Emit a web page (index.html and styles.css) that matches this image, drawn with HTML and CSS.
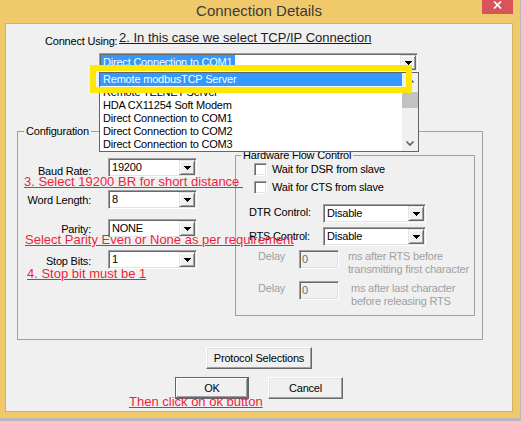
FILE: index.html
```html
<!DOCTYPE html>
<html>
<head>
<meta charset="utf-8">
<link rel="stylesheet" href="styles.css">
</head>
<body>
<div class="window">
  <div class="titlebar">
    <span class="title">Connection Details</span>
    <span class="close"><svg width="9" height="8" viewBox="0 0 9 8"><path d="M1 0.5L8 7.5M8 0.5L1 7.5" stroke="#fff" stroke-width="1.7"/></svg></span>
  </div>
  <div class="client">
    <div class="connect-label">Connect Using:</div>
    <div class="combo combo-conn">
      <span class="combo-text"><span class="sel">Direct Connection to COM1</span></span>
      <span class="drop"><i class="tri"></i></span>
    </div>

    <div class="group config">
      <div class="group-title">Configuration</div>
      <div class="config-body">
        <div class="serial">
          <span class="lbl lbl-baud">Baud Rate:</span>
          <div class="combo"><span class="combo-text">19200</span><span class="drop"><i class="tri"></i></span></div>
          <span class="lbl">Word Length:</span>
          <div class="combo"><span class="combo-text">8</span><span class="drop"><i class="tri"></i></span></div>
          <span class="lbl">Parity:</span>
          <div class="combo"><span class="combo-text">NONE</span><span class="drop"><i class="tri"></i></span></div>
          <span class="lbl lbl-stop">Stop Bits:</span>
          <div class="combo"><span class="combo-text">1</span><span class="drop"><i class="tri"></i></span></div>
        </div>

        <div class="group hw">
          <div class="group-title hw-title">Hardware Flow Control</div>
          <div class="check-row"><span class="checkbox"></span><span>Wait for DSR from slave</span></div>
          <div class="check-row check-row-2"><span class="checkbox"></span><span>Wait for CTS from slave</span></div>
          <div class="ctl-row">
            <span class="ctl-label">DTR Control:</span>
            <div class="combo combo-wide"><span class="combo-text">Disable</span><span class="drop"><i class="tri"></i></span></div>
          </div>
          <div class="ctl-row ctl-row-2">
            <span class="ctl-label ctl-label-2">RTS Control:</span>
            <div class="combo combo-wide"><span class="combo-text">Disable</span><span class="drop"><i class="tri"></i></span></div>
          </div>
          <div class="delay-row">
            <span class="delay-label">Delay</span>
            <span class="delay-input">0</span>
            <span class="delay-desc">ms after RTS before<br>transmitting first character</span>
          </div>
          <div class="delay-row delay-row-2">
            <span class="delay-label">Delay</span>
            <span class="delay-input">0</span>
            <span class="delay-desc">ms after last character<br>before releasing RTS</span>
          </div>
        </div>
      </div>
    </div>

    <div class="btn-row">
      <button class="btn btn-proto">Protocol Selections</button>
    </div>
    <div class="btn-row btn-row-2">
      <button class="btn btn-default btn-ok">OK</button>
      <button class="btn btn-cancel">Cancel</button>
    </div>
  </div>

  <div class="dropdown">
    <ul class="dd-items">
      <li class="active">Remote modbusTCP Server</li>
      <li>Remote TELNET Server</li>
      <li>HDA CX11254 Soft Modem</li>
      <li>Direct Connection to COM1</li>
      <li>Direct Connection to COM2</li>
      <li>Direct Connection to COM3</li>
    </ul>
    <div class="dd-scroll">
      <span class="sb-btn"><svg width="16" height="16" viewBox="0 0 16 16"><path d="M4.5 9.5L8 6L11.5 9.5" fill="none" stroke="#606060" stroke-width="1.6"/></svg></span>
      <span class="sb-thumb"></span>
      <span class="sb-space"></span>
      <span class="sb-btn"><svg width="16" height="16" viewBox="0 0 16 16"><path d="M4.5 6.5L8 10L11.5 6.5" fill="none" stroke="#606060" stroke-width="1.6"/></svg></span>
    </div>
  </div>
  <div class="callout"></div>

  <span class="note note-dark note-2">2. In this case we select TCP/IP Connection</span>
  <span class="note note-3">3. Select 19200 BR for short distance&nbsp;</span>
  <span class="note note-parity">Select Parity Even or None as per requirement</span>
  <span class="note note-4">4. Stop bit must be 1</span>
  <span class="note note-ok">Then click on ok button</span>
</div>
</body>
</html>
```

FILE: styles.css
```css
* { box-sizing: border-box; }
html, body { margin: 0; padding: 0; }
body {
  background: #b9b9b9;
  width: 521px;
  height: 421px;
  overflow: hidden;
  font-family: "Liberation Sans", Arial, sans-serif;
  font-size: 11px;
  color: #000;
}
.window {
  position: relative;
  width: 520px;
  height: 418px;
  background: #f0c96b;
  padding: 0 7px 6px 5px;
}
.titlebar {
  height: 23px;
  display: grid;
  grid-template-columns: 1fr auto 1fr;
  align-items: start;
}
.title {
  grid-column: 2;
  font-size: 15px;
  line-height: 17px;
  padding-top: 2px;
  color: #3b3b3b;
}
.close {
  grid-column: 3;
  justify-self: end;
  width: 31px;
  height: 14px;
  background: #d9545a;
  display: flex;
  align-items: flex-start;
  justify-content: center;
  padding-top: 1px;
}
.close svg { display: block; }

.client {
  width: 508px;
  height: 389px;
  background: #f0f0f0;
  border: 1px solid #d3b063;
  letter-spacing: -0.2px;
}
.connect-label {
  margin: 11px 0 0 39px;
  line-height: 13px;
}

/* combo boxes */
.combo {
  display: flex;
  height: 19px;
  background: #fff;
  border: 1px solid;
  border-color: #a0a0a0 #fff #fff #a0a0a0;
  box-shadow: inset 1px 1px #696969, inset -1px -1px #e3e3e3;
  padding: 1px;
}
.combo-text {
  flex: 1;
  line-height: 15px;
  padding-left: 2px;
  white-space: nowrap;
  overflow: hidden;
}
.drop {
  width: 16px;
  height: 15px;
  background: #f0f0f0;
  border: 1px solid;
  border-color: #e3e3e3 #696969 #696969 #e3e3e3;
  box-shadow: inset 1px 1px #fff, inset -1px -1px #a0a0a0;
  display: flex;
  align-items: center;
  justify-content: center;
}
.tri {
  display: block;
  width: 7px;
  height: 4px;
  background:
    linear-gradient(#000, #000) 0 0 / 7px 1px no-repeat,
    linear-gradient(#000, #000) 1px 1px / 5px 1px no-repeat,
    linear-gradient(#000, #000) 2px 2px / 3px 1px no-repeat,
    linear-gradient(#000, #000) 3px 3px / 1px 1px no-repeat;
}
.combo-conn {
  margin: 5px 0 0 93px;
  width: 319px;
}
.combo-conn .combo-text { padding-left: 0; }
.sel {
  display: inline-block;
  background: #3399ff;
  color: #fff;
  padding: 0 2px;
  line-height: 14px;
}
.combo-wide { width: 103px; }

/* group boxes */
.group {
  border: 1px solid #a0a0a0;
}
.group-title {
  width: max-content;
  margin: -7px 0 0 6px;
  padding: 0 2px;
  background: #f0f0f0;
  line-height: 13px;
}
.hw-title { margin-left: 5px; }
.config {
  margin: 59px 0 0 11px;
  width: 466px;
  height: 209px;
}
.config-body {
  display: flex;
  align-items: flex-start;
}
.serial {
  display: grid;
  grid-template-columns: 73px 89px;
  grid-template-rows: 32px 29px 31px 19px;
  column-gap: 17px;
  align-items: start;
  margin-top: 20px;
}
.lbl {
  text-align: right;
  padding-top: 4px;
  line-height: 13px;
  white-space: nowrap;
}
.lbl-baud { padding-top: 7px; }
.lbl-stop { padding-top: 5px; }

.hw {
  margin: 17px 0 0 38px;
  width: 240px;
  height: 161px;
}
.check-row {
  display: flex;
  height: 13px;
  margin-top: 1px;
  padding-left: 18px;
  line-height: 13px;
  white-space: nowrap;
}
.check-row-2 { margin-top: 5px; }
.checkbox {
  width: 13px;
  height: 13px;
  background: #fff;
  border: 1px solid;
  border-color: #a0a0a0 #fff #fff #a0a0a0;
  box-shadow: inset 1px 1px #696969, inset -1px -1px #e3e3e3;
  margin-right: 5px;
}
.ctl-row {
  display: flex;
  margin-top: 10px;
  padding-left: 13px;
}
.ctl-row-2 { margin-top: 4px; }
.ctl-label {
  width: 74px;
  padding-top: 2px;
  line-height: 13px;
  white-space: nowrap;
}
.ctl-label-2 { padding-top: 3px; }
.delay-row {
  display: flex;
  align-items: flex-start;
  margin-top: 4px;
  padding-left: 22px;
  color: #a0a0a0;
}
.delay-label {
  width: 41px;
  line-height: 13px;
}
.delay-input {
  width: 40px;
  height: 19px;
  border: 1px solid;
  border-color: #a0a0a0 #fff #fff #a0a0a0;
  box-shadow: inset 1px 1px #696969, inset -1px -1px #e3e3e3;
  background: #f0f0f0;
  padding: 1px 0 0 2px;
  line-height: 15px;
  color: #6d6d6d;
}
.delay-desc {
  margin-left: 9px;
  line-height: 13px;
  white-space: nowrap;
}
.delay-row-2 { margin-top: 5px; }
.delay-row-2 .delay-label,
.delay-row-2 .delay-desc { padding-top: 1px; }
.delay-row-2 .delay-desc { margin-left: 12px; }

/* buttons */
.btn-row {
  display: flex;
  justify-content: center;
  gap: 19px;
  margin-top: 7px;
}
.btn-row-2 { margin-top: 8px; }
.btn {
  height: 22px;
  font: inherit;
  letter-spacing: inherit;
  color: #000;
  background: #f0f0f0;
  border: 1px solid;
  border-color: #fff #696969 #696969 #fff;
  box-shadow: inset -1px -1px #a0a0a0, inset 1px 1px #e3e3e3;
  padding: 0;
  line-height: 20px;
}
.btn-proto { width: 106px; }
.btn-ok { width: 74px; }
.btn-cancel { width: 75px; }
.btn-default {
  border-color: #646464;
  box-shadow: inset -1px -1px #696969, inset 1px 1px #fff, inset -2px -2px #a0a0a0;
}

/* open drop-down list (overlay) */
.dropdown {
  position: absolute;
  left: 99px;
  top: 72px;
  width: 320px;
  height: 80px;
  background: #fff;
  border: 1px solid #646464;
  display: flex;
  letter-spacing: -0.2px;
}
.dd-items {
  flex: 1;
  list-style: none;
  margin: 0;
  padding: 0;
}
.dd-items li {
  height: 13px;
  line-height: 13px;
  padding-left: 3px;
  white-space: nowrap;
}
.dd-items li.active {
  background: #3399ff;
  color: #fff;
}
.dd-scroll {
  width: 16px;
  background: #f0f0f0;
  display: flex;
  flex-direction: column;
}
.sb-btn { height: 16px; }
.sb-btn svg { display: block; }
.sb-thumb {
  margin-top: 3px;
  height: 16px;
  background: #c2c2c2;
}
.sb-space { flex: 1; }

.callout {
  position: absolute;
  left: 90px;
  top: 65px;
  width: 322px;
  height: 28px;
  border: 6px solid #fde800;
}

/* annotations drawn over the screenshot */
.note {
  position: absolute;
  font-family: "Liberation Sans", Arial, sans-serif;
  font-size: 13px;
  line-height: 15px;
  text-decoration: underline;
  white-space: nowrap;
  color: #ee1f3b;
}
.note-dark { color: #1c1c24; }
.note-2 { left: 119px; top: 30px; }
.note-3 { left: 24px; top: 174px; }
.note-parity { left: 25px; top: 232px; }
.note-4 { left: 27px; top: 266px; }
.note-ok { left: 129px; top: 394px; }
```
